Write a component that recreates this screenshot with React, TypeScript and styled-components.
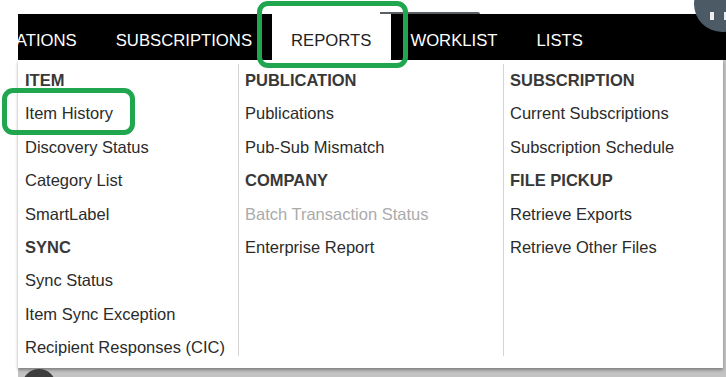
import React from "react";
import styled, { createGlobalStyle } from "styled-components";

const GlobalStyle = createGlobalStyle`
  html, body {
    margin: 0;
    padding: 0;
    background: #ffffff;
  }
  body {
    font-family: "Liberation Sans", Arial, sans-serif;
  }
`;

const Page = styled.div`
  position: relative;
  width: 726px;
  height: 377px;
  overflow: hidden;
  background: #ffffff;
  display: flex;
  flex-direction: column;
`;

const TopStrip = styled.div`
  height: 14px;
  display: flex;
  align-items: flex-end;
  padding-left: 380px;
`;

const Ledge = styled.div`
  width: 100px;
  height: 2px;
  background: #5a5f63;
  border-top-right-radius: 2px;
`;

const Avatar = styled.div`
  position: absolute;
  top: -24px;
  left: 694px;
  width: 56px;
  height: 56px;
  border-radius: 50%;
  background: #4c5a66;
  &::before,
  &::after {
    content: "";
    position: absolute;
    top: 36px;
    width: 4px;
    height: 8px;
    background: #e8eef2;
  }
  &::before {
    left: 16px;
  }
  &::after {
    left: 30px;
  }
`;

const Main = styled.div`
  margin-left: 18px;
  flex: 1;
  display: flex;
  flex-direction: column;
  min-height: 0;
`;

const Nav = styled.nav`
  height: 46px;
  background: #000000;
  display: flex;
  overflow: hidden;
`;

const NavItem = styled.div<{ $active?: boolean; $clip?: number }>`
  height: 46px;
  box-sizing: border-box;
  padding: 8px 19.5px 0;
  margin-left: ${(p) => (p.$clip ? `-${p.$clip}px` : "0")};
  line-height: 38px;
  font-size: 16.7px;
  white-space: nowrap;
  color: ${(p) => (p.$active ? "#222222" : "#ffffff")};
  background: ${(p) => (p.$active ? "#ffffff" : "transparent")};
`;

const Body = styled.div`
  flex: 1;
  background: #c3c3c3;
  display: flex;
  flex-direction: column;
  min-height: 0;
`;

const Menu = styled.div`
  margin-right: 3px;
  background: #ffffff;
  box-shadow: 0 2px 3px rgba(0, 0, 0, 0.35);
  display: grid;
  grid-template-columns: 220px 265px 1fr;
  padding: 4px 0 12.3px;
`;

const Column = styled.div<{ $first?: boolean }>`
  border-left: ${(p) => (p.$first ? "none" : "1px solid #d4d4d4")};
  padding-left: ${(p) => (p.$first ? "7px" : "6px")};
  margin-bottom: ${(p) => (p.$first ? "-9px" : "0")};
  display: flex;
  flex-direction: column;
`;

const Heading = styled.div`
  height: 33.4px;
  line-height: 33.4px;
  font-size: 16.5px;
  font-weight: bold;
  color: #383838;
  white-space: nowrap;
`;

const Link = styled.div<{ $disabled?: boolean }>`
  height: 33.4px;
  line-height: 33.4px;
  font-size: 16.5px;
  color: ${(p) => (p.$disabled ? "#ababab" : "#2b2b2b")};
  white-space: nowrap;
`;

const Footer = styled.div`
  flex: 1;
  display: flex;
  align-items: flex-start;
  padding: 1px 0 0 4px;
`;

const Bubble = styled.div`
  width: 34px;
  height: 34px;
  border-radius: 50%;
  background: #3d3d3d;
`;

const Highlight = styled.div<{ $x: number; $y: number; $w: number; $h: number }>`
  position: absolute;
  left: ${(p) => p.$x}px;
  top: ${(p) => p.$y}px;
  width: ${(p) => p.$w}px;
  height: ${(p) => p.$h}px;
  box-sizing: border-box;
  border: 5px solid #1fa64f;
  border-radius: 11px;
  pointer-events: none;
`;

type Entry = { label: string; heading?: boolean; disabled?: boolean };

const columns: Entry[][] = [
  [
    { label: "ITEM", heading: true },
    { label: "Item History" },
    { label: "Discovery Status" },
    { label: "Category List" },
    { label: "SmartLabel" },
    { label: "SYNC", heading: true },
    { label: "Sync Status" },
    { label: "Item Sync Exception" },
    { label: "Recipient Responses (CIC)" },
  ],
  [
    { label: "PUBLICATION", heading: true },
    { label: "Publications" },
    { label: "Pub-Sub Mismatch" },
    { label: "COMPANY", heading: true },
    { label: "Batch Transaction Status", disabled: true },
    { label: "Enterprise Report" },
  ],
  [
    { label: "SUBSCRIPTION", heading: true },
    { label: "Current Subscriptions" },
    { label: "Subscription Schedule" },
    { label: "FILE PICKUP", heading: true },
    { label: "Retrieve Exports" },
    { label: "Retrieve Other Files" },
  ],
];

export default function App() {
  return (
    <Page>
      <GlobalStyle />
      <TopStrip>
        <Ledge />
      </TopStrip>
      <Main>
        <Nav>
          <NavItem $clip={21.7}>ATIONS</NavItem>
          <NavItem>SUBSCRIPTIONS</NavItem>
          <NavItem $active>REPORTS</NavItem>
          <NavItem>WORKLIST</NavItem>
          <NavItem>LISTS</NavItem>
        </Nav>
        <Body>
          <Menu>
            {columns.map((col, i) => (
              <Column key={i} $first={i === 0}>
                {col.map((e) =>
                  e.heading ? (
                    <Heading key={e.label}>{e.label}</Heading>
                  ) : (
                    <Link key={e.label} $disabled={e.disabled}>
                      {e.label}
                    </Link>
                  )
                )}
              </Column>
            ))}
          </Menu>
          <Footer>
            <Bubble />
          </Footer>
        </Body>
      </Main>
      <Avatar />
      <Highlight $x={257} $y={1} $w={151} $h={67} />
      <Highlight $x={2} $y={88} $w={133} $h={47} />
    </Page>
  );
}
